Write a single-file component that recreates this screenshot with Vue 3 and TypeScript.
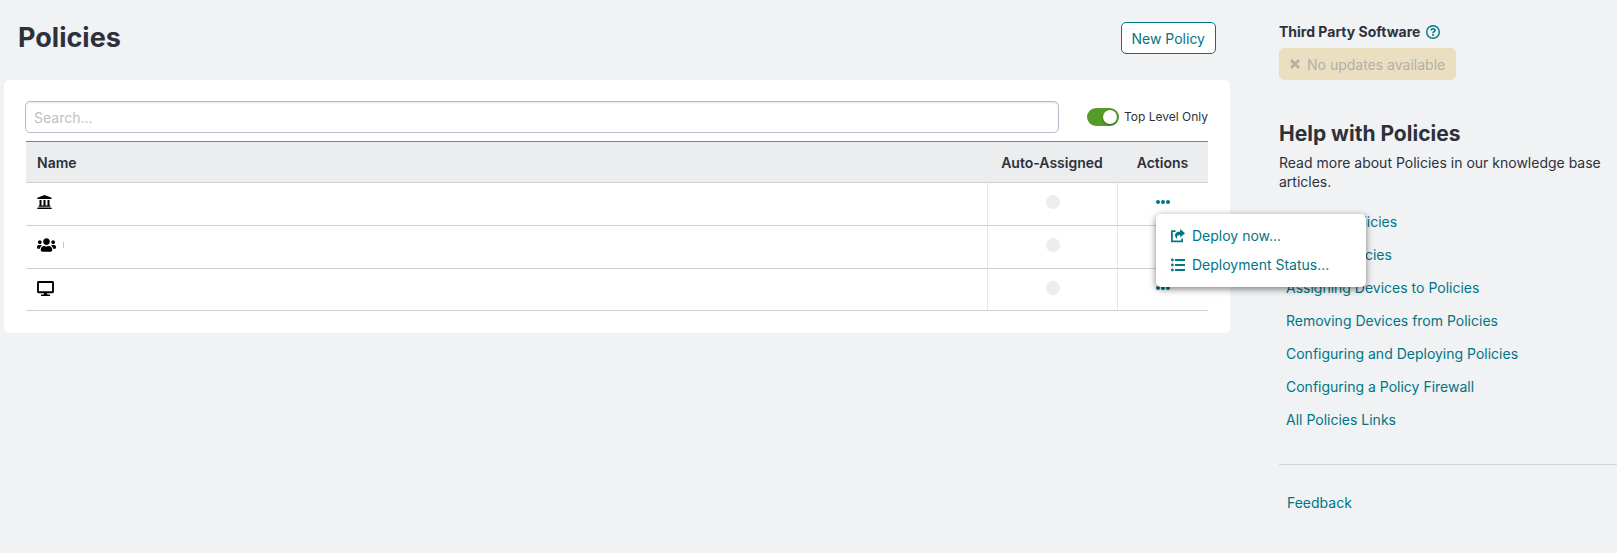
<script setup lang="ts">
import { ref } from 'vue'

type RowKind = 'bank' | 'group' | 'device'

interface PolicyRow {
  id: number
  kind: RowKind
  label: string
}

const rows: PolicyRow[] = [
  { id: 1, kind: 'bank', label: 'Organization policy' },
  { id: 2, kind: 'group', label: 'Group policy' },
  { id: 3, kind: 'device', label: 'Device policy' },
]

const helpLinks: string[] = [
  'Creating Policies',
  'Nesting Policies',
  'Assigning Devices to Policies',
  'Removing Devices from Policies',
  'Configuring and Deploying Policies',
  'Configuring a Policy Firewall',
  'All Policies Links',
]

const search = ref('')
const topLevelOnly = ref(true)
const openMenu = ref<number | null>(1)

function toggleMenu(id: number) {
  openMenu.value = openMenu.value === id ? null : id
}
</script>

<template>
  <div class="page">
    <main class="main">
      <header class="page-head">
        <h1>Policies</h1>
        <button type="button" class="btn btn-outline">New Policy</button>
      </header>

      <section class="card">
        <div class="filters">
          <input v-model="search" class="search" type="text" placeholder="Search..." aria-label="Search" />
          <label class="switch">
            <input v-model="topLevelOnly" type="checkbox" />
            <span>Top Level Only</span>
          </label>
        </div>

        <table class="policies">
          <colgroup>
            <col />
            <col class="col-auto" />
            <col class="col-actions" />
          </colgroup>
          <thead>
            <tr>
              <th scope="col">Name</th>
              <th scope="col" class="center">Auto-Assigned</th>
              <th scope="col" class="center">Actions</th>
            </tr>
          </thead>
          <tbody>
            <tr v-for="row in rows" :key="row.id">
              <td>
                <div class="name" role="img" :aria-label="row.label">
                  <svg v-if="row.kind === 'bank'" width="15" height="14" viewBox="0 0 15 14">
                    <path d="M7.500 0 14.600 2.700V4H.400V2.700zM2.500 5h2v5.500h2V5h2v5.500h2V5h2v5.500h.8v1.200H1.700v-1.200h.8zM.9 12.400h13.200l.6.700v.9H.3v-.9z" />
                  </svg>
                  <svg v-else-if="row.kind === 'group'" width="19" height="14" viewBox="0 0 640 448">
                    <path d="M96 192c35.300 0 64-28.700 64-64s-28.700-64-64-64-64 28.700-64 64 28.700 64 64 64zm448 0c35.300 0 64-28.700 64-64s-28.700-64-64-64-64 28.700-64 64 28.700 64 64 64zm32 32h-64c-17.600 0-33.500 7.100-45.100 18.600 40.300 22.100 68.900 62 75.100 109.400h66c17.700 0 32-14.300 32-32v-32c0-35.300-28.700-64-64-64zm-256 0c61.900 0 112-50.100 112-112S381.900 0 320 0 208 50.100 208 112s50.100 112 112 112zm76.800 32h-8.300c-20.800 10-43.900 16-68.500 16s-47.600-6-68.500-16h-8.300C179.600 256 128 307.600 128 371.200V400c0 26.500 21.500 48 48 48h288c26.500 0 48-21.500 48-48v-28.800c0-63.600-51.600-115.200-115.200-115.200zm-223.700-13.400C161.500 231.100 145.600 224 128 224H64c-35.300 0-64 28.700-64 64v32c0 17.700 14.300 32 32 32h65.900c6.300-47.400 34.900-87.300 75.200-109.400z" />
                  </svg>
                  <svg v-else width="17" height="15" viewBox="0 0 576 512">
                    <path d="M528 0H48C21.500 0 0 21.500 0 48v320c0 26.500 21.500 48 48 48h192l-16 48h-72c-13.300 0-24 10.700-24 24s10.700 24 24 24h272c13.300 0 24-10.700 24-24s-10.700-24-24-24h-72l-16-48h192c26.500 0 48-21.500 48-48V48c0-26.500-21.500-48-48-48zm-16 352H64V64h448v288z" />
                  </svg>
                  <span v-if="row.kind === 'group'" class="tick"></span>
                </div>
              </td>
              <td><span class="dot"></span></td>
              <td>
                <div class="actions">
                  <button type="button" class="more" aria-label="Actions" @click="toggleMenu(row.id)">
                    <svg width="14" height="4" viewBox="0 0 14 4">
                      <circle cx="2" cy="2" r="2" />
                      <circle cx="7" cy="2" r="2" />
                      <circle cx="12" cy="2" r="2" />
                    </svg>
                  </button>
                  <div v-if="openMenu === row.id" class="menu">
                    <button type="button">
                      <svg width="14" height="14" viewBox="0 0 14 14">
                        <path d="M4.500 2.200H.9v10.200h10.300V9.500" fill="none" stroke="currentColor" stroke-width="1.700" stroke-linejoin="round" />
                        <path d="M9.200 0 14 4.300 9.200 8.400V6C6.600 6 5.600 7 6.100 9.900 2.500 7.200 3.500 2.600 9.200 2.500z" />
                      </svg>
                      Deploy now...
                    </button>
                    <button type="button">
                      <svg width="14" height="14" viewBox="0 0 14 14">
                        <circle cx="1.400" cy="2" r="1.400" /><circle cx="1.400" cy="7" r="1.400" /><circle cx="1.400" cy="12" r="1.400" />
                        <path d="M4 1h10v2H4zM4 6h10v2H4zM4 11h10v2H4z" />
                      </svg>
                      Deployment Status...
                    </button>
                  </div>
                </div>
              </td>
            </tr>
          </tbody>
        </table>
      </section>
    </main>

    <aside class="side">
      <h3>
        Third Party Software
        <svg width="14" height="14" viewBox="0 0 14 14" role="img" aria-label="Help">
          <circle cx="7" cy="7" r="6.300" fill="none" stroke="currentColor" stroke-width="1.400" />
          <path d="M5 5.500C5.200 3.300 9 3.300 9 5.400 9 6.800 7 6.700 7 8.200" fill="none" stroke="currentColor" stroke-width="1.500" />
          <circle cx="7" cy="10.100" r="1" />
        </svg>
      </h3>
      <button type="button" class="btn btn-updates" disabled>
        <svg width="10" height="10" viewBox="0 0 10 10">
          <path d="M1 1 9 9M9 1 1 9" fill="none" stroke="currentColor" stroke-width="2.800" />
        </svg>
        No updates available
      </button>

      <h2>Help with Policies</h2>
      <p>Read more about Policies in our knowledge base articles.</p>
      <ul>
        <li v-for="link in helpLinks" :key="link"><a href="#">{{ link }}</a></li>
      </ul>
      <footer><a href="#">Feedback</a></footer>
    </aside>
  </div>
</template>

<style>
body {
  margin: 0;
  background: #f0f2f4;
}
</style>

<style scoped>
.page {
  display: flex;
  gap: 49px;
  min-height: 100vh;
  padding-left: 4px;
  box-sizing: border-box;
  background: #f0f2f4;
  color: #2d313b;
  font-family: Inter, "Liberation Sans", sans-serif;
  font-size: 14px;
  line-height: 19px;
}

svg {
  display: block;
  flex: none;
  fill: currentColor;
}

button,
input {
  font: inherit;
}

a {
  color: #007584;
  text-decoration: none;
}

.main {
  flex: 1;
  min-width: 0;
}

.page-head {
  display: flex;
  justify-content: space-between;
  align-items: flex-start;
  height: 58px;
  padding: 22px 14px 0;
}

h1 {
  margin: 0;
  font-size: 27px;
  line-height: 31px;
  font-weight: 700;
}

.btn {
  display: flex;
  align-items: center;
  box-sizing: border-box;
  height: 32px;
  padding: 0 10px;
  border: 1px solid transparent;
  border-radius: 5px;
}

.btn-outline {
  border-color: #007584;
  background: #fff;
  color: #007584;
}

.card {
  padding: 21px 22px 22px;
  border-radius: 5px;
  background: #fff;
}

.filters {
  display: flex;
  align-items: center;
  margin: 0 0 8px -1px;
}

.search {
  flex: 1;
  min-width: 0;
  box-sizing: border-box;
  height: 32px;
  padding: 0 8px;
  border: 1px solid #b9bbc8;
  border-radius: 5px;
  background: #fff;
  box-shadow: inset 0 1px 2px rgba(0, 0, 0, 0.1);
  color: inherit;
}

.search::placeholder {
  color: #bfbfbf;
  opacity: 1;
}

.switch {
  display: flex;
  align-items: center;
  gap: 5px;
  margin-left: 28px;
  font-size: 12px;
  line-height: 16px;
}

.switch input {
  appearance: none;
  display: flex;
  width: 32px;
  height: 18px;
  margin: 0;
  padding: 2px;
  box-sizing: border-box;
  border-radius: 9px;
  background: #b9bbc8;
}

.switch input::before {
  content: "";
  width: 14px;
  height: 14px;
  border-radius: 50%;
  background: #fff;
  box-shadow: 0 1px 2px rgba(0, 0, 0, 0.4);
}

.switch input:checked {
  justify-content: flex-end;
  background: #569a27;
}

.policies {
  width: 100%;
  table-layout: fixed;
  border-collapse: separate;
  border-spacing: 0;
}

.col-auto {
  width: 130px;
}

.col-actions {
  width: 91px;
}

th {
  height: 40px;
  padding: 0 11px;
  border-top: 1px solid #7b8489;
  border-bottom: 1px solid #cdd2d8;
  background: #ebedee;
  font-weight: 600;
  text-align: left;
}

.center {
  padding-left: 0;
  padding-right: 0;
  text-align: center;
}

td {
  height: 30px;
  padding: 12px 11px 0;
  border-bottom: 1px solid #cdd0d7;
  vertical-align: top;
}

td + td {
  padding-left: 0;
  padding-right: 0;
  border-left: 1px solid #e4e6e9;
}

tr:last-child td {
  height: 29px;
}

.name {
  display: flex;
  align-items: center;
  gap: 7px;
  height: 14px;
  color: #000;
}

.tick {
  width: 1px;
  height: 6px;
  background: #a9cfd4;
}

.dot {
  display: block;
  width: 14px;
  height: 14px;
  margin: 0 auto;
  border-radius: 50%;
  background: #ebedee;
}

.actions {
  position: relative;
  width: 14px;
  margin: 0 auto;
}

.more {
  display: flex;
  align-items: center;
  width: 14px;
  height: 14px;
  padding: 0;
  border: 0;
  background: none;
  color: #007584;
}

.menu {
  position: absolute;
  z-index: 10;
  top: 19px;
  left: 0;
  width: 210px;
  padding: 7px 0 8px;
  box-sizing: border-box;
  border-radius: 5px;
  background: #fff;
  box-shadow: 0 2px 7px rgba(0, 0, 0, 0.5);
}

.menu button {
  display: flex;
  align-items: center;
  gap: 7px;
  width: 100%;
  padding: 5px 15px;
  border: 0;
  background: none;
  color: #007584;
  text-align: left;
}

.side {
  width: 338px;
  padding-top: 22px;
}

h3 {
  display: flex;
  align-items: center;
  gap: 6px;
  margin: 0 0 7px;
  font-size: 14px;
  font-weight: 700;
}

h3 svg {
  color: #007584;
}

.btn-updates {
  gap: 7px;
  background: #eadfc1;
  color: #b2b0a9;
}

h2 {
  margin: 40px 0 5px;
  font-size: 21px;
  line-height: 28px;
  font-weight: 700;
}

p {
  margin: 0 8px 0 0;
}

ul {
  margin: 14px 0 28px;
  padding: 0 0 0 7px;
  list-style: none;
}

li {
  padding: 7px 0;
}

footer {
  padding: 28px 8px 0;
  border-top: 1px solid #d2d4d7;
}
</style>
